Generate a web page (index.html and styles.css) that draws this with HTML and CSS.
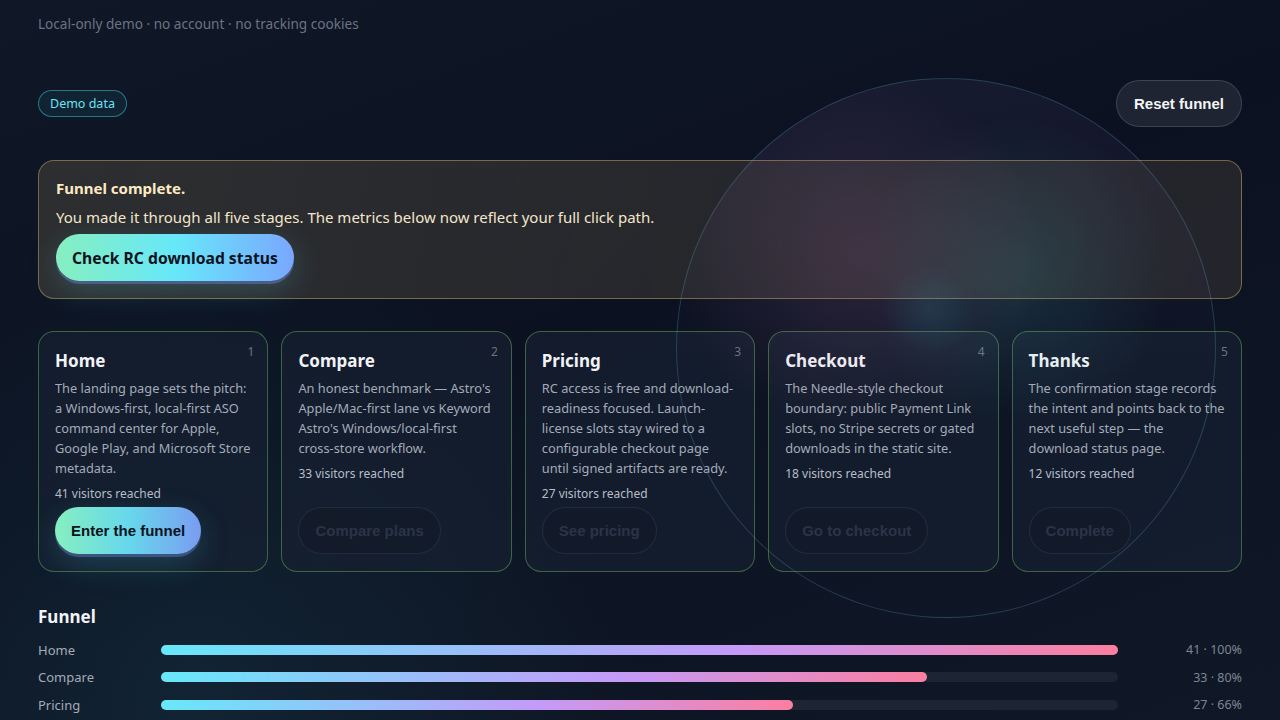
FILE: index.html
```html
<!DOCTYPE html>
<html lang="en">
<head>
    <meta charset="UTF-8">
    <title>Funnel demo</title>
    <link rel="stylesheet" href="styles.css">
</head>
<body>
    <div class="orb"></div>

    <main class="page">
        <p class="note">Local-only demo · no account · no tracking cookies</p>

        <div class="toolbar">
            <span class="pill">Demo data</span>
            <button class="reset">Reset funnel</button>
        </div>

        <section class="banner">
            <strong class="banner-title">Funnel complete.</strong>
            <p class="banner-text">You made it through all five stages. The metrics below now reflect your full click path.</p>
            <a class="cta" href="#">Check RC download status</a>
        </section>

        <section class="stages">
            <div class="stage">
                <span class="stage-num">1</span>
                <h3>Home</h3>
                <p class="stage-desc">The landing page sets the pitch: a Windows-first, local-first ASO command center for Apple, Google Play, and Microsoft Store metadata.</p>
                <p class="stage-count">41 visitors reached</p>
                <button class="stage-btn active">Enter the funnel</button>
            </div>
            <div class="stage">
                <span class="stage-num">2</span>
                <h3>Compare</h3>
                <p class="stage-desc">An honest benchmark — Astro's Apple/Mac-first lane vs Keyword Astro's Windows/local-first cross-store workflow.</p>
                <p class="stage-count">33 visitors reached</p>
                <button class="stage-btn" disabled>Compare plans</button>
            </div>
            <div class="stage">
                <span class="stage-num">3</span>
                <h3>Pricing</h3>
                <p class="stage-desc">RC access is free and download-readiness focused. Launch-license slots stay wired to a configurable checkout page until signed artifacts are ready.</p>
                <p class="stage-count">27 visitors reached</p>
                <button class="stage-btn" disabled>See pricing</button>
            </div>
            <div class="stage">
                <span class="stage-num">4</span>
                <h3>Checkout</h3>
                <p class="stage-desc">The Needle-style checkout boundary: public Payment Link slots, no Stripe secrets or gated downloads in the static site.</p>
                <p class="stage-count">18 visitors reached</p>
                <button class="stage-btn" disabled>Go to checkout</button>
            </div>
            <div class="stage">
                <span class="stage-num">5</span>
                <h3>Thanks</h3>
                <p class="stage-desc">The confirmation stage records the intent and points back to the next useful step — the download status page.</p>
                <p class="stage-count">12 visitors reached</p>
                <button class="stage-btn" disabled>Complete</button>
            </div>
        </section>

        <section class="funnel">
            <h2>Funnel</h2>
            <div class="row">
                <span class="row-label">Home</span>
                <div class="track"><div class="fill" style="width: 100%"></div></div>
                <span class="row-value">41 · 100%</span>
            </div>
            <div class="row">
                <span class="row-label">Compare</span>
                <div class="track"><div class="fill" style="width: 80%"></div></div>
                <span class="row-value">33 · 80%</span>
            </div>
            <div class="row">
                <span class="row-label">Pricing</span>
                <div class="track"><div class="fill" style="width: 66%"></div></div>
                <span class="row-value">27 · 66%</span>
            </div>
        </section>
    </main>
</body>
</html>
```

FILE: styles.css
```css
html, body {
    height: 100%;
}

body {
    margin: 0;
    overflow: hidden;
    font-family: "Noto Sans", "Open Sans", sans-serif;
    color: #e5e7eb;
    background:
        radial-gradient(circle at 15% 95%, rgba(45, 120, 140, 0.16), transparent 35%),
        linear-gradient(160deg, #101828 0%, #0b1120 45%, #101827 100%);
}

/* decorative glass orb, drawn over the content */
.orb {
    position: absolute;
    left: 676px;
    top: 78px;
    width: 538px;
    height: 538px;
    border-radius: 50%;
    border: 1px solid rgba(103, 200, 230, 0.22);
    background:
        radial-gradient(circle at 34% 33%, rgba(200, 120, 175, 0.15), transparent 36%),
        radial-gradient(circle at 63% 36%, rgba(80, 200, 210, 0.14), transparent 32%),
        radial-gradient(circle at 47% 43%, rgba(40, 170, 190, 0.14), transparent 11%),
        linear-gradient(180deg, rgba(120, 100, 170, 0.1), transparent 60%);
    pointer-events: none;
    z-index: 2;
}

.page {
    position: relative;
    z-index: 1;
    padding: 0 38px;
}

.note {
    margin: 0;
    padding-top: 14px;
    font-size: 13.6px;
    color: #6b7382;
}

.toolbar {
    display: flex;
    justify-content: space-between;
    align-items: center;
    margin-top: 47px;
}

.pill {
    display: inline-block;
    padding: 4px 11px;
    font-size: 12.5px;
    color: #6ee0f2;
    border: 1px solid rgba(56, 189, 210, 0.55);
    border-radius: 999px;
    background: rgba(20, 60, 75, 0.35);
}

.reset {
    height: 47px;
    padding: 0 17px;
    border-radius: 999px;
    border: 1px solid rgba(148, 163, 184, 0.25);
    background: #1e2432;
    color: #f3f4f6;
    font-family: "Liberation Sans", Arial, sans-serif;
    font-weight: bold;
    font-size: 15px;
}

.banner {
    margin-top: 33px;
    height: 139px;
    box-sizing: border-box;
    padding: 17px 17px;
    border-radius: 16px;
    border: 1px solid rgba(202, 170, 100, 0.5);
    background: linear-gradient(100deg, rgba(50, 50, 50, 0.88), rgba(46, 46, 48, 0.75) 60%, rgba(42, 42, 46, 0.8));
}

.banner-title {
    display: block;
    font-size: 15px;
    color: #fdeac4;
}

.banner-text {
    margin: 9px 0 7px;
    font-size: 15px;
    color: #f4e6cc;
}

.cta {
    display: inline-flex;
    align-items: center;
    height: 47px;
    padding: 0 16px;
    border-radius: 999px;
    text-decoration: none;
    font-weight: bold;
    font-size: 15.7px;
    color: #0b1220;
    background: linear-gradient(90deg, #86efc0, #67e8f9 50%, #7aa7ff);
    box-shadow: 0 3px 0 rgba(100, 120, 200, 0.5), 0 8px 30px rgba(90, 220, 230, 0.22);
}

.stages {
    display: grid;
    grid-template-columns: repeat(5, 1fr);
    gap: 13px;
    margin-top: 32px;
}

.stage {
    position: relative;
    display: flex;
    flex-direction: column;
    height: 241px;
    box-sizing: border-box;
    padding: 17px 16px 17px;
    border-radius: 16px;
    border: 1px solid rgba(92, 160, 90, 0.55);
    background: rgba(22, 32, 48, 0.72);
}

.stage-num {
    position: absolute;
    top: 11px;
    right: 13px;
    font-size: 12px;
    color: #6b7382;
}

.stage h3 {
    margin: 0;
    font-size: 17px;
    color: #f1f3f6;
}

.stage-desc {
    margin: 6px 0 0;
    font-size: 12.8px;
    line-height: 20px;
    color: #a3abb8;
}

.stage-count {
    margin: 7px 0 0;
    font-size: 12px;
    color: #b7bec9;
}

.stage-btn {
    margin-top: auto;
    align-self: flex-start;
    height: 47px;
    padding: 0 16px;
    border-radius: 999px;
    border: 1px solid rgba(40, 52, 70, 0.7);
    background: rgba(18, 26, 40, 0.7);
    color: #2a3446;
    font-family: "Liberation Sans", Arial, sans-serif;
    font-weight: bold;
    font-size: 15px;
}

.stage-btn.active {
    border: none;
    color: #0b1220;
    background: linear-gradient(90deg, #86efc0, #67d8ec 50%, #7a9cf0);
    box-shadow: 0 3px 0 rgba(100, 120, 200, 0.45), 0 10px 30px rgba(70, 200, 220, 0.22);
}

.funnel {
    margin-top: 33px;
}

.funnel h2 {
    margin: 0 0 8px;
    font-size: 17px;
    color: #f1f3f6;
}

.row {
    display: grid;
    grid-template-columns: 123px 1fr 124px;
    align-items: center;
    height: 27.5px;
}

.row-label {
    font-size: 13px;
    color: #a3abb8;
}

.track {
    height: 10px;
    border-radius: 999px;
    background: #1d2533;
}

.fill {
    height: 100%;
    border-radius: 999px;
    background: linear-gradient(90deg, #67e8f9, #c49af8 60%, #fb7fa0);
}

.row-value {
    text-align: right;
    font-size: 12.5px;
    color: #7d8594;
}
```
